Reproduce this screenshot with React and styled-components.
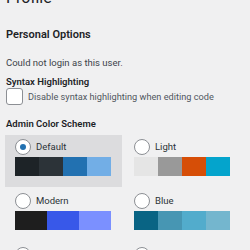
import React from 'react'
import styled, { createGlobalStyle } from 'styled-components'

const GlobalStyle = createGlobalStyle`
  html, body {
    margin: 0;
    padding: 0;
    background: #f0f0f1;
    overflow: hidden;
  }
`

const schemes = [
  { name: 'Default', colors: ['#1d2327', '#2c3338', '#2271b1', '#72aee6'], selected: true },
  { name: 'Light', colors: ['#e5e5e5', '#999999', '#d64e07', '#04a4cc'] },
  { name: 'Modern', colors: ['#1e1e1e', '#3858e9', '#7b90ff'] },
  { name: 'Blue', colors: ['#096484', '#4796b3', '#52accc', '#74b6ce'] },
  { name: 'Coffee', colors: ['#46403c', '#59524c', '#c7a589', '#9ea476'] },
  { name: 'Ectoplasm', colors: ['#413256', '#523f6d', '#a3b745', '#d46f15'] },
]

export default function App() {
  return (
    <>
      <GlobalStyle />
      <Page>
        <Title>Profile</Title>
        <SectionTitle>Personal Options</SectionTitle>
        <Notice>Could not login as this user.</Notice>

        <Label $gap={7}>Syntax Highlighting</Label>
        <CheckRow>
          <Checkbox />
          <CheckText>Disable syntax highlighting when editing code</CheckText>
        </CheckRow>

        <Label $gap={13}>Admin Color Scheme</Label>
        <SchemeGrid>
          {schemes.map((s) => (
            <SchemeOption key={s.name} selected={s.selected}>
              <OptionHead>
                <Radio checked={s.selected} />
                <OptionName>{s.name}</OptionName>
              </OptionHead>
              <Swatches>
                {s.colors.map((c) => (
                  <Swatch key={c} $color={c} />
                ))}
              </Swatches>
            </SchemeOption>
          ))}
        </SchemeGrid>
      </Page>
    </>
  )
}

const Page = styled.div`
  width: 250px;
  height: 250px;
  overflow: hidden;
  padding: 0 6px;
  box-sizing: border-box;
  font-family: Roboto, 'Noto Sans', sans-serif;
  color: #3c434a;
`

const Title = styled.h1`
  margin: -10px 0 0;
  font-size: 16px;
  line-height: 16px;
  font-weight: 400;
  color: #1d2327;
`

const SectionTitle = styled.h2`
  margin: 22px 0 0;
  font-size: 11px;
  line-height: 14px;
  font-weight: 600;
  color: #1d2327;
`

const Notice = styled.p`
  margin: 15px 0 0;
  font-size: 9.5px;
  line-height: 12px;
`

const Label = styled.div`
  margin-top: ${({ $gap }) => $gap}px;
  font-size: 9.5px;
  line-height: 12px;
  font-weight: 600;
  color: #1d2327;
`

const CheckRow = styled.div`
  display: flex;
  align-items: center;
  gap: 5px;
  margin-top: 0;
`

const Checkbox = styled.span`
  width: 15px;
  height: 15px;
  border: 1px solid #8c8f94;
  border-radius: 3px;
  background: #fff;
  flex-shrink: 0;
`

const CheckText = styled.span`
  font-size: 9.2px;
  line-height: 12px;
  color: #50575e;
  white-space: nowrap;
`

const SchemeGrid = styled.div`
  display: grid;
  grid-template-columns: 117px 117px;
  column-gap: 2px;
  row-gap: 2px;
  margin: 5px 0 0 -1px;
`

const SchemeOption = styled.div`
  padding: 4px 10px 11px;
  background: ${({ selected }) => (selected ? '#dcdcde' : 'transparent')};
`

const OptionHead = styled.div`
  display: flex;
  align-items: center;
  gap: 5px;
  height: 16px;
`

const Radio = styled.span`
  position: relative;
  width: 14px;
  height: 14px;
  border: 1px solid #8c8f94;
  border-radius: 50%;
  background: #fff;
  flex-shrink: 0;

  &::after {
    content: '';
    display: ${({ checked }) => (checked ? 'block' : 'none')};
    position: absolute;
    left: 4px;
    top: 4px;
    width: 6px;
    height: 6px;
    border-radius: 50%;
    background: #2271b1;
  }
`

const OptionName = styled.span`
  font-size: 9.5px;
  line-height: 12px;
  color: #2c3338;
`

const Swatches = styled.div`
  display: flex;
  width: 96px;
  height: 19px;
  margin-top: 2px;
`

const Swatch = styled.span`
  flex: 1;
  background: ${({ $color }) => $color};
`
